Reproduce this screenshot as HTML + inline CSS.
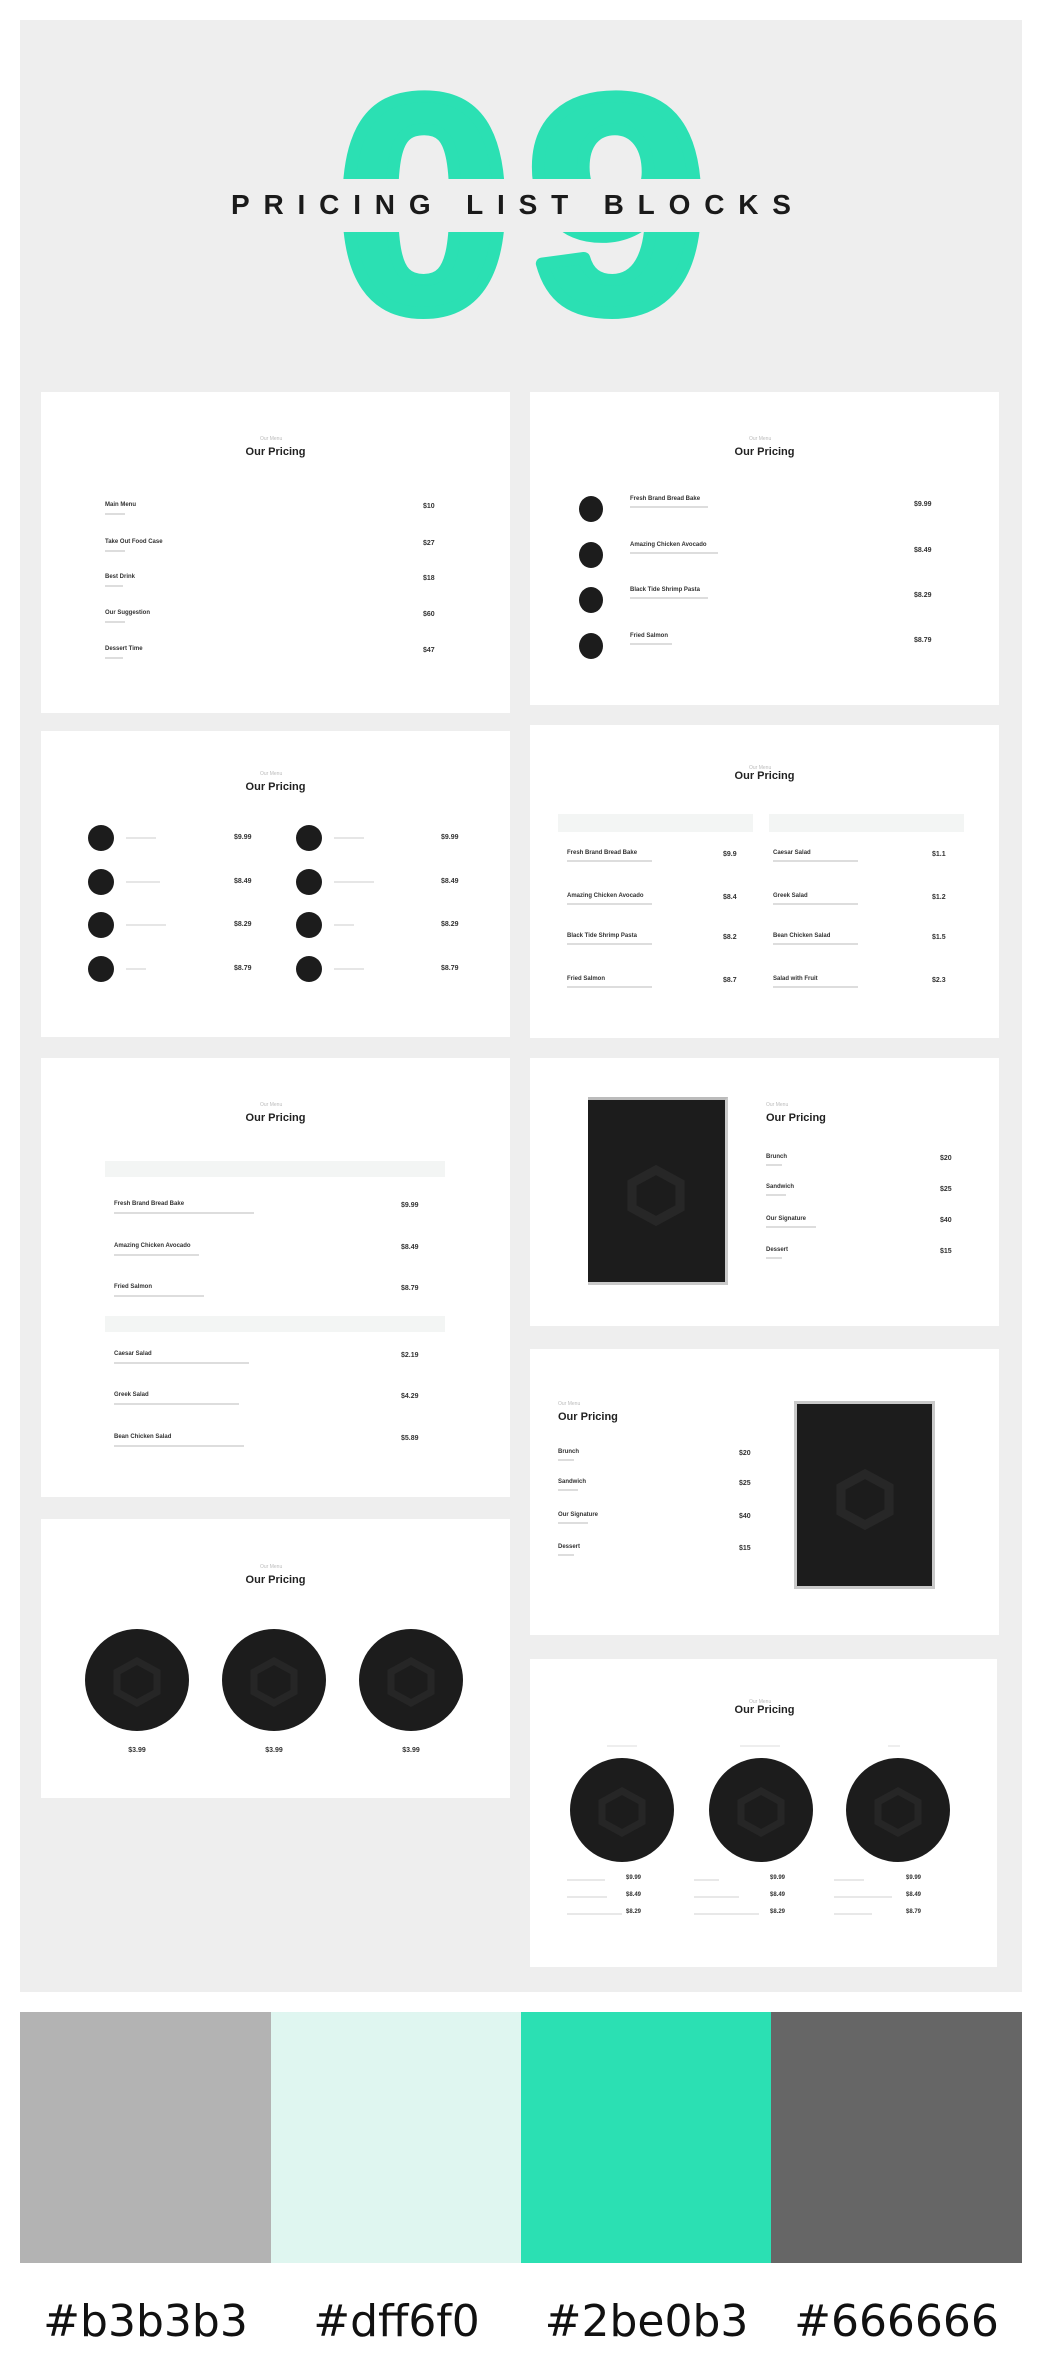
<!DOCTYPE html>
<html><head><meta charset="utf-8"><style>
*{margin:0;padding:0;box-sizing:border-box}
body{width:1040px;height:2360px;background:#fff;position:relative;font-family:"Liberation Sans",sans-serif;overflow:hidden}
.a{position:absolute}
.panel{left:20px;top:20px;width:1002px;height:1972px;background:#eeeeee}
.card{position:absolute;background:#fff}
.h{position:absolute;font-weight:bold;font-size:11px;color:#222;white-space:nowrap}
.sub{position:absolute;font-size:5px;color:#bbb;white-space:nowrap}
.n{position:absolute;font-size:6px;font-weight:bold;color:#333;white-space:nowrap}
.g{position:absolute;height:2px;background:#ddd}
.p{position:absolute;font-size:7px;font-weight:bold;color:#333;white-space:nowrap}
.dot{position:absolute;border-radius:50%;background:#1c1c1c}
.img{position:absolute;background:#1c1c1c}
.sw{position:absolute;top:2012px;height:251px;width:251px}
.st{position:absolute;top:2296px;font-family:"DejaVu Sans",sans-serif;font-size:44px;color:#111;width:251px;text-align:center}
</style></head><body>
<div class="a panel"></div>

<svg class="a" style="left:0;top:0" width="1040" height="360">
 <g font-family="Liberation Sans" font-weight="bold" font-size="306" fill="#2be0b3" stroke="#2be0b3" stroke-width="12" stroke-linejoin="round">
 <text x="336" y="310" textLength="176" lengthAdjust="spacingAndGlyphs">0</text>
 <text x="527" y="310" textLength="180" lengthAdjust="spacingAndGlyphs">9</text>
 </g>
 <rect x="300" y="179" width="440" height="53" fill="#eeeeee"/>
 <text x="231" y="214" font-family="Liberation Sans" font-weight="bold" font-size="28" fill="#1a1a1a" textLength="560" lengthAdjust="spacing">PRICING LIST BLOCKS</text>
</svg>

<!-- Card 1 -->
<div class="card" style="left:41px;top:392px;width:469px;height:321px">
 <div class="sub" style="left:219px;top:44px">Our Menu</div>
 <div class="h" style="left:0;width:469px;text-align:center;top:54px">Our Pricing</div>
 <div class="n" style="left:64px;top:110px">Main Menu</div><div class="g" style="left:64px;top:121px;width:20px"></div><div class="p" style="left:382px;top:111px">$10</div>
 <div class="n" style="left:64px;top:147px">Take Out Food Case</div><div class="g" style="left:64px;top:158px;width:20px"></div><div class="p" style="left:382px;top:148px">$27</div>
 <div class="n" style="left:64px;top:182px">Best Drink</div><div class="g" style="left:64px;top:193px;width:18px"></div><div class="p" style="left:382px;top:183px">$18</div>
 <div class="n" style="left:64px;top:218px">Our Suggestion</div><div class="g" style="left:64px;top:229px;width:20px"></div><div class="p" style="left:382px;top:219px">$60</div>
 <div class="n" style="left:64px;top:254px">Dessert Time</div><div class="g" style="left:64px;top:265px;width:18px"></div><div class="p" style="left:382px;top:255px">$47</div>
</div>

<!-- Card 2 -->
<div class="card" style="left:530px;top:392px;width:469px;height:313px">
 <div class="sub" style="left:219px;top:44px">Our Menu</div>
 <div class="h" style="left:0;width:469px;text-align:center;top:54px">Our Pricing</div>
 <div class="dot" style="left:49px;top:104px;width:24px;height:26px"></div><div class="n" style="left:100px;top:104px">Fresh Brand Bread Bake</div><div class="g" style="left:100px;top:114px;width:78px"></div><div class="p" style="left:384px;top:109px">$9.99</div>
 <div class="dot" style="left:49px;top:150px;width:24px;height:26px"></div><div class="n" style="left:100px;top:150px">Amazing Chicken Avocado</div><div class="g" style="left:100px;top:160px;width:88px"></div><div class="p" style="left:384px;top:155px">$8.49</div>
 <div class="dot" style="left:49px;top:195px;width:24px;height:26px"></div><div class="n" style="left:100px;top:195px">Black Tide Shrimp Pasta</div><div class="g" style="left:100px;top:205px;width:78px"></div><div class="p" style="left:384px;top:200px">$8.29</div>
 <div class="dot" style="left:49px;top:241px;width:24px;height:26px"></div><div class="n" style="left:100px;top:241px">Fried Salmon</div><div class="g" style="left:100px;top:251px;width:42px"></div><div class="p" style="left:384px;top:245px">$8.79</div>
</div>

<!-- Card 3 -->
<div class="card" style="left:41px;top:731px;width:469px;height:306px">
 <div class="sub" style="left:219px;top:40px">Our Menu</div>
 <div class="h" style="left:0;width:469px;text-align:center;top:50px">Our Pricing</div>
 <div class="dot" style="left:47px;top:94px;width:26px;height:26px"></div><div class="g" style="left:85px;top:106px;width:30px;background:#e6e6e6"></div><div class="p" style="left:193px;top:103px">$9.99</div>
 <div class="dot" style="left:47px;top:138px;width:26px;height:26px"></div><div class="g" style="left:85px;top:150px;width:34px;background:#e6e6e6"></div><div class="p" style="left:193px;top:147px">$8.49</div>
 <div class="dot" style="left:47px;top:181px;width:26px;height:26px"></div><div class="g" style="left:85px;top:193px;width:40px;background:#e6e6e6"></div><div class="p" style="left:193px;top:190px">$8.29</div>
 <div class="dot" style="left:47px;top:225px;width:26px;height:26px"></div><div class="g" style="left:85px;top:237px;width:20px;background:#e6e6e6"></div><div class="p" style="left:193px;top:234px">$8.79</div>
 <div class="dot" style="left:255px;top:94px;width:26px;height:26px"></div><div class="g" style="left:293px;top:106px;width:30px;background:#e6e6e6"></div><div class="p" style="left:400px;top:103px">$9.99</div>
 <div class="dot" style="left:255px;top:138px;width:26px;height:26px"></div><div class="g" style="left:293px;top:150px;width:40px;background:#e6e6e6"></div><div class="p" style="left:400px;top:147px">$8.49</div>
 <div class="dot" style="left:255px;top:181px;width:26px;height:26px"></div><div class="g" style="left:293px;top:193px;width:20px;background:#e6e6e6"></div><div class="p" style="left:400px;top:190px">$8.29</div>
 <div class="dot" style="left:255px;top:225px;width:26px;height:26px"></div><div class="g" style="left:293px;top:237px;width:30px;background:#e6e6e6"></div><div class="p" style="left:400px;top:234px">$8.79</div>
</div>

<!-- Card 4 -->
<div class="card" style="left:530px;top:725px;width:469px;height:313px">
 <div class="sub" style="left:219px;top:40px">Our Menu</div>
 <div class="h" style="left:0;width:469px;text-align:center;top:45px">Our Pricing</div>
 <div class="a" style="left:28px;top:89px;width:195px;height:18px;background:#f3f5f4"></div>
 <div class="a" style="left:239px;top:89px;width:195px;height:18px;background:#f3f5f4"></div>
 <div class="n" style="left:37px;top:125px">Fresh Brand Bread Bake</div><div class="g" style="left:37px;top:135px;width:85px"></div><div class="p" style="left:193px;top:126px">$9.9</div>
 <div class="n" style="left:37px;top:168px">Amazing Chicken Avocado</div><div class="g" style="left:37px;top:178px;width:85px"></div><div class="p" style="left:193px;top:169px">$8.4</div>
 <div class="n" style="left:37px;top:208px">Black Tide Shrimp Pasta</div><div class="g" style="left:37px;top:218px;width:85px"></div><div class="p" style="left:193px;top:209px">$8.2</div>
 <div class="n" style="left:37px;top:251px">Fried Salmon</div><div class="g" style="left:37px;top:261px;width:85px"></div><div class="p" style="left:193px;top:252px">$8.7</div>
 <div class="n" style="left:243px;top:125px">Caesar Salad</div><div class="g" style="left:243px;top:135px;width:85px"></div><div class="p" style="left:402px;top:126px">$1.1</div>
 <div class="n" style="left:243px;top:168px">Greek Salad</div><div class="g" style="left:243px;top:178px;width:85px"></div><div class="p" style="left:402px;top:169px">$1.2</div>
 <div class="n" style="left:243px;top:208px">Bean Chicken Salad</div><div class="g" style="left:243px;top:218px;width:85px"></div><div class="p" style="left:402px;top:209px">$1.5</div>
 <div class="n" style="left:243px;top:251px">Salad with Fruit</div><div class="g" style="left:243px;top:261px;width:85px"></div><div class="p" style="left:402px;top:252px">$2.3</div>
</div>

<!-- Card 5 -->
<div class="card" style="left:41px;top:1058px;width:469px;height:439px">
 <div class="sub" style="left:219px;top:44px">Our Menu</div>
 <div class="h" style="left:0;width:469px;text-align:center;top:54px">Our Pricing</div>
 <div class="a" style="left:64px;top:103px;width:340px;height:16px;background:#f3f5f4"></div>
 <div class="n" style="left:73px;top:143px">Fresh Brand Bread Bake</div><div class="g" style="left:73px;top:154px;width:140px"></div><div class="p" style="left:360px;top:144px">$9.99</div>
 <div class="n" style="left:73px;top:185px">Amazing Chicken Avocado</div><div class="g" style="left:73px;top:196px;width:85px"></div><div class="p" style="left:360px;top:186px">$8.49</div>
 <div class="n" style="left:73px;top:226px">Fried Salmon</div><div class="g" style="left:73px;top:237px;width:90px"></div><div class="p" style="left:360px;top:227px">$8.79</div>
 <div class="a" style="left:64px;top:258px;width:340px;height:16px;background:#f3f5f4"></div>
 <div class="n" style="left:73px;top:293px">Caesar Salad</div><div class="g" style="left:73px;top:304px;width:135px"></div><div class="p" style="left:360px;top:294px">$2.19</div>
 <div class="n" style="left:73px;top:334px">Greek Salad</div><div class="g" style="left:73px;top:345px;width:125px"></div><div class="p" style="left:360px;top:335px">$4.29</div>
 <div class="n" style="left:73px;top:376px">Bean Chicken Salad</div><div class="g" style="left:73px;top:387px;width:130px"></div><div class="p" style="left:360px;top:377px">$5.89</div>
</div>

<!-- Card 6 -->
<div class="card" style="left:530px;top:1058px;width:469px;height:268px">
 <div class="img" style="left:58px;top:39px;width:140px;height:188px;border:3px solid #c9c9c9;border-left:none;border-top:3px solid #bbb">
  <svg width="137" height="185" style="position:absolute;left:0;top:0"><polygon points="68,70 92,83 92,108 68,121 44,108 44,83" fill="none" stroke="#272727" stroke-width="9"/></svg>
 </div>
 <div class="sub" style="left:236px;top:44px">Our Menu</div>
 <div class="h" style="left:236px;top:54px">Our Pricing</div>
 <div class="n" style="left:236px;top:96px">Brunch</div><div class="g" style="left:236px;top:106px;width:16px"></div><div class="p" style="left:410px;top:97px">$20</div>
 <div class="n" style="left:236px;top:126px">Sandwich</div><div class="g" style="left:236px;top:136px;width:20px"></div><div class="p" style="left:410px;top:128px">$25</div>
 <div class="n" style="left:236px;top:158px">Our Signature</div><div class="g" style="left:236px;top:168px;width:50px"></div><div class="p" style="left:410px;top:159px">$40</div>
 <div class="n" style="left:236px;top:189px">Dessert</div><div class="g" style="left:236px;top:199px;width:16px"></div><div class="p" style="left:410px;top:190px">$15</div>
</div>

<!-- Card 7 -->
<div class="card" style="left:530px;top:1349px;width:469px;height:286px">
 <div class="sub" style="left:28px;top:52px">Our Menu</div>
 <div class="h" style="left:28px;top:62px">Our Pricing</div>
 <div class="n" style="left:28px;top:100px">Brunch</div><div class="g" style="left:28px;top:110px;width:16px"></div><div class="p" style="left:209px;top:101px">$20</div>
 <div class="n" style="left:28px;top:130px">Sandwich</div><div class="g" style="left:28px;top:140px;width:20px"></div><div class="p" style="left:209px;top:131px">$25</div>
 <div class="n" style="left:28px;top:163px">Our Signature</div><div class="g" style="left:28px;top:173px;width:30px"></div><div class="p" style="left:209px;top:164px">$40</div>
 <div class="n" style="left:28px;top:195px">Dessert</div><div class="g" style="left:28px;top:205px;width:16px"></div><div class="p" style="left:209px;top:196px">$15</div>
 <div class="img" style="left:264px;top:52px;width:141px;height:188px;border:3px solid #c9c9c9">
  <svg width="135" height="182" style="position:absolute;left:0;top:0"><polygon points="68,70 92,83 92,108 68,121 44,108 44,83" fill="none" stroke="#272727" stroke-width="9"/></svg>
 </div>
</div>

<!-- Card 8 -->
<div class="card" style="left:41px;top:1519px;width:469px;height:279px">
 <div class="sub" style="left:219px;top:45px">Our Menu</div>
 <div class="h" style="left:0;width:469px;text-align:center;top:55px">Our Pricing</div>
 <div class="dot" style="left:44px;top:110px;width:104px;height:102px"><svg width="104" height="102"><polygon points="52,32 72,43 72,63 52,74 32,63 32,43" fill="none" stroke="#262626" stroke-width="7"/></svg></div>
 <div class="dot" style="left:181px;top:110px;width:104px;height:102px"><svg width="104" height="102"><polygon points="52,32 72,43 72,63 52,74 32,63 32,43" fill="none" stroke="#262626" stroke-width="7"/></svg></div>
 <div class="dot" style="left:318px;top:110px;width:104px;height:102px"><svg width="104" height="102"><polygon points="52,32 72,43 72,63 52,74 32,63 32,43" fill="none" stroke="#262626" stroke-width="7"/></svg></div>
 <div class="p" style="left:44px;width:104px;text-align:center;top:228px">$3.99</div>
 <div class="p" style="left:181px;width:104px;text-align:center;top:228px">$3.99</div>
 <div class="p" style="left:318px;width:104px;text-align:center;top:228px">$3.99</div>
</div>

<!-- Card 9 -->
<div class="card" style="left:530px;top:1659px;width:467px;height:308px">
 <div class="sub" style="left:219px;top:40px">Our Menu</div>
 <div class="h" style="left:0;width:469px;text-align:center;top:45px">Our Pricing</div>
 <div class="g" style="left:77px;top:86px;width:30px;background:#eee"></div>
 <div class="g" style="left:210px;top:86px;width:40px;background:#eee"></div>
 <div class="g" style="left:358px;top:86px;width:12px;background:#eee"></div>
 <div class="dot" style="left:40px;top:99px;width:104px;height:104px"><svg width="104" height="104"><polygon points="52,33 72,44 72,64 52,75 32,64 32,44" fill="none" stroke="#262626" stroke-width="7"/></svg></div>
 <div class="dot" style="left:179px;top:99px;width:104px;height:104px"><svg width="104" height="104"><polygon points="52,33 72,44 72,64 52,75 32,64 32,44" fill="none" stroke="#262626" stroke-width="7"/></svg></div>
 <div class="dot" style="left:316px;top:99px;width:104px;height:104px"><svg width="104" height="104"><polygon points="52,33 72,44 72,64 52,75 32,64 32,44" fill="none" stroke="#262626" stroke-width="7"/></svg></div>
 <div class="g" style="left:37px;top:220px;width:38px;background:#e8e8e8"></div><div class="p" style="left:96px;top:216px;font-size:6px">$9.99</div>
 <div class="g" style="left:37px;top:237px;width:40px;background:#e8e8e8"></div><div class="p" style="left:96px;top:233px;font-size:6px">$8.49</div>
 <div class="g" style="left:37px;top:254px;width:55px;background:#e8e8e8"></div><div class="p" style="left:96px;top:250px;font-size:6px">$8.29</div>
 <div class="g" style="left:164px;top:220px;width:25px;background:#e8e8e8"></div><div class="p" style="left:240px;top:216px;font-size:6px">$9.99</div>
 <div class="g" style="left:164px;top:237px;width:45px;background:#e8e8e8"></div><div class="p" style="left:240px;top:233px;font-size:6px">$8.49</div>
 <div class="g" style="left:164px;top:254px;width:65px;background:#e8e8e8"></div><div class="p" style="left:240px;top:250px;font-size:6px">$8.29</div>
 <div class="g" style="left:304px;top:220px;width:30px;background:#e8e8e8"></div><div class="p" style="left:376px;top:216px;font-size:6px">$9.99</div>
 <div class="g" style="left:304px;top:237px;width:58px;background:#e8e8e8"></div><div class="p" style="left:376px;top:233px;font-size:6px">$8.49</div>
 <div class="g" style="left:304px;top:254px;width:38px;background:#e8e8e8"></div><div class="p" style="left:376px;top:250px;font-size:6px">$8.79</div>
</div>

<div class="sw" style="left:20px;background:#b3b3b3"></div>
<div class="sw" style="left:271px;background:#dff6f0"></div>
<div class="sw" style="left:521px;background:#2be0b3"></div>
<div class="sw" style="left:771px;width:251px;background:#666666"></div>
<div class="st" style="left:20px">#b3b3b3</div>
<div class="st" style="left:271px">#dff6f0</div>
<div class="st" style="left:521px">#2be0b3</div>
<div class="st" style="left:771px">#666666</div>
</body></html>
